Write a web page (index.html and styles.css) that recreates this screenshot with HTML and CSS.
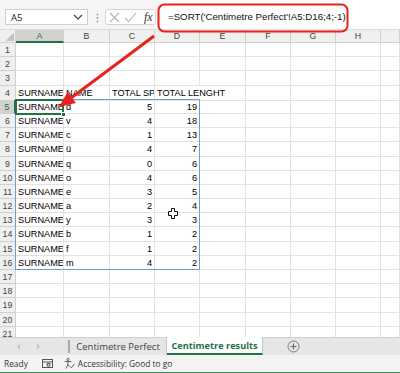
FILE: index.html
```html
<!DOCTYPE html>
<html>
<head>
<meta charset="utf-8">
<title>Centimetre results</title>
<link rel="stylesheet" href="styles.css">
</head>
<body>
<div class="app">
  <div class="fbar">
    <div class="namebox"><span>A5</span>
      <svg class="chev" width="10" height="6" viewBox="0 0 10 6"><path d="M1 1 L5 5 L9 1" fill="none" stroke="#444" stroke-width="1.2"/></svg>
    </div>
    <svg class="grip" width="3" height="10" viewBox="0 0 3 10"><circle cx="1.5" cy="1.5" r="0.9" fill="#9a9a9a"/><circle cx="1.5" cy="5" r="0.9" fill="#9a9a9a"/><circle cx="1.5" cy="8.5" r="0.9" fill="#9a9a9a"/></svg>
    <div class="fxbox">
      <svg width="11" height="11" viewBox="0 0 11 11"><path d="M1 1 L10 10 M10 1 L1 10" stroke="#b4b4b4" stroke-width="1.1" fill="none"/></svg>
      <svg width="13" height="11" viewBox="0 0 13 11"><path d="M1 6 L4.5 9.5 L12 1" stroke="#b4b4b4" stroke-width="1.1" fill="none"/></svg>
      <span class="fx">fx</span>
    </div>
    <div class="formula">=SORT('Centimetre Perfect'!A5:D16;4;-1)</div>
  </div>

  <div class="sheet">
    <div class="row hdr"><div class="corner"></div><div class="sel">A</div><div>B</div><div>C</div><div>D</div><div>E</div><div>F</div><div>G</div><div>H</div><div></div></div>
    <div class="row"><div class="rh">1</div><div></div><div></div><div></div><div></div><div></div><div></div><div></div><div></div><div></div></div>
    <div class="row"><div class="rh">2</div><div></div><div></div><div></div><div></div><div></div><div></div><div></div><div></div><div></div></div>
    <div class="row"><div class="rh">3</div><div></div><div></div><div></div><div></div><div></div><div></div><div></div><div></div><div></div></div>
    <div class="row"><div class="rh">4</div><div>SURNAME</div><div>NAME</div><div><span class="clip">TOTAL SPE</span></div><div class="ov">TOTAL LENGHT</div><div></div><div></div><div></div><div></div><div></div></div>
    <div class="row"><div class="rh rsel">5</div><div>SURNAME</div><div>d</div><div class="n">5</div><div class="n">19</div><div></div><div></div><div></div><div></div><div></div></div>
    <div class="row"><div class="rh">6</div><div>SURNAME</div><div>v</div><div class="n">4</div><div class="n">18</div><div></div><div></div><div></div><div></div><div></div></div>
    <div class="row"><div class="rh">7</div><div>SURNAME</div><div>c</div><div class="n">1</div><div class="n">13</div><div></div><div></div><div></div><div></div><div></div></div>
    <div class="row"><div class="rh">8</div><div>SURNAME</div><div>ü</div><div class="n">4</div><div class="n">7</div><div></div><div></div><div></div><div></div><div></div></div>
    <div class="row"><div class="rh">9</div><div>SURNAME</div><div>q</div><div class="n">0</div><div class="n">6</div><div></div><div></div><div></div><div></div><div></div></div>
    <div class="row"><div class="rh">10</div><div>SURNAME</div><div>o</div><div class="n">4</div><div class="n">6</div><div></div><div></div><div></div><div></div><div></div></div>
    <div class="row"><div class="rh">11</div><div>SURNAME</div><div>e</div><div class="n">3</div><div class="n">5</div><div></div><div></div><div></div><div></div><div></div></div>
    <div class="row"><div class="rh">12</div><div>SURNAME</div><div>a</div><div class="n">2</div><div class="n">4</div><div></div><div></div><div></div><div></div><div></div></div>
    <div class="row"><div class="rh">13</div><div>SURNAME</div><div>y</div><div class="n">3</div><div class="n">3</div><div></div><div></div><div></div><div></div><div></div></div>
    <div class="row"><div class="rh">14</div><div>SURNAME</div><div>b</div><div class="n">1</div><div class="n">2</div><div></div><div></div><div></div><div></div><div></div></div>
    <div class="row"><div class="rh">15</div><div>SURNAME</div><div>f</div><div class="n">1</div><div class="n">2</div><div></div><div></div><div></div><div></div><div></div></div>
    <div class="row"><div class="rh">16</div><div>SURNAME</div><div>m</div><div class="n">4</div><div class="n">2</div><div></div><div></div><div></div><div></div><div></div></div>
    <div class="row"><div class="rh">17</div><div></div><div></div><div></div><div></div><div></div><div></div><div></div><div></div><div></div></div>
    <div class="row"><div class="rh">18</div><div></div><div></div><div></div><div></div><div></div><div></div><div></div><div></div><div></div></div>
    <div class="row"><div class="rh">19</div><div></div><div></div><div></div><div></div><div></div><div></div><div></div><div></div><div></div></div>
    <div class="row"><div class="rh">20</div><div></div><div></div><div></div><div></div><div></div><div></div><div></div><div></div><div></div></div>
    <div class="row"><div class="rh">21</div><div></div><div></div><div></div><div></div><div></div><div></div><div></div><div></div><div></div></div>

    <div class="spill"></div>
    <div class="active"></div>
    <div class="handle"></div>
  </div>

  <div class="tabs">
    <div class="nav">
      <svg width="5" height="7" viewBox="0 0 5 7"><path d="M4 0.5 L0.8 3.5 L4 6.5 Z" fill="#c4c4c4"/></svg>
      <svg width="5" height="7" viewBox="0 0 5 7"><path d="M1 0.5 L4.2 3.5 L1 6.5 Z" fill="#c4c4c4"/></svg>
    </div>
    <div class="tsep"></div>
    <div class="tab">Centimetre Perfect</div>
    <div class="tab on">Centimetre results</div>
    <div class="tabrest">
      <svg width="13" height="13" viewBox="0 0 13 13"><circle cx="6.5" cy="6.5" r="5.5" fill="none" stroke="#7b7b7b" stroke-width="1"/><path d="M6.5 3.5 V9.5 M3.5 6.5 H9.5" stroke="#6b6b6b" stroke-width="1.2"/></svg>
    </div>
  </div>

  <div class="status">
    <span class="ready">Ready</span>
    <svg class="macro" width="11" height="9" viewBox="0 0 11 9"><rect x="0.5" y="0.5" width="10" height="8" fill="none" stroke="#555" stroke-width="1"/><path d="M0.5 3 H10.5" stroke="#555"/><circle cx="6.5" cy="5.8" r="2" fill="#555"/><circle cx="6.5" cy="5.8" r="0.9" fill="#f3f3f3"/></svg>
    <svg class="acc" width="11" height="11" viewBox="0 0 11 11"><circle cx="4" cy="1.5" r="1.1" fill="none" stroke="#555" stroke-width="0.9"/><path d="M0.5 3.6 H7.5 M4 3.6 V6.5 L2 10.5 M4 6.5 L5.2 8.5" stroke="#555" stroke-width="0.9" fill="none"/><path d="M6 8.2 L7.4 9.8 L10.5 5.8" stroke="#555" stroke-width="0.9" fill="none"/></svg>
    <span class="acctext">Accessibility: Good to go</span>
  </div>

  <svg class="annot" width="400" height="373" viewBox="0 0 400 373">
    <rect x="158.5" y="4.5" width="189" height="27" rx="6" ry="6" fill="none" stroke="#e8211d" stroke-width="2"/>
    <line x1="154" y1="36" x2="71" y2="98" stroke="#e8211d" stroke-width="3"/>
    <path d="M59 107 L67.6 91.9 L76 103.1 Z" fill="#e8211d"/>
    <path d="M171.5 208.5 h3 v3 h3 v4 h-3 v3 h-3 v-3 h-3 v-4 h3 z" fill="#fff" stroke="#111" stroke-width="1"/>
  </svg>
</div>
</body>
</html>
```

FILE: styles.css
```css
* { box-sizing: border-box; margin: 0; padding: 0; }
html, body { margin: 0; background: #fff; }
body { width: 400px; height: 373px; overflow: hidden; font-family: "Open Sans", "Liberation Sans", sans-serif; color: #222; }

.app { position: relative; width: 400px; height: 373px; display: flex; flex-direction: column; overflow: hidden; }

/* formula bar */
.fbar { height: 30px; flex: none; display: flex; align-items: flex-start; background: #f5f5f5; border-bottom: 1px solid #dcdcdc; padding-left: 5px; }
.namebox { margin-top: 9px; width: 83px; height: 16px; background: #fff; border: 1px solid #cfcfcf; display: flex; align-items: center; justify-content: space-between; padding: 0 3px 0 5px; font-size: 9.5px; color: #222; }
.chev { margin-right: 1px; }
.grip { margin: 13px 6px 0 8px; }
.fxbox { margin-top: 9px; width: 51px; height: 16px; background: #fff; border: 1px solid #d6d6d6; border-radius: 3px; display: flex; align-items: center; padding-left: 3px; gap: 4px; }
.fx { font-family: "Liberation Serif", serif; font-style: italic; font-size: 12px; color: #333; margin-left: 3px; line-height: 14px; }
.formula { align-self: stretch; flex: 1; margin-left: 5px; background: #fff; padding: 9px 0 0 7px; font-family: "Liberation Sans", sans-serif; font-size: 9.7px; line-height: 16px; color: #111; white-space: nowrap; }

/* sheet */
.sheet { position: relative; flex: none; height: 307px; overflow: hidden; background: #fff; }
.row { display: grid; grid-template-columns: 16px 48px 46px 45px 45px 46px 45px 45px 45px 19px; height: 14.2px; }
.row > div { border-right: 1px solid #e2e2e2; border-bottom: 1px solid #e2e2e2; font-family: "Liberation Sans", sans-serif; font-size: 9.2px; line-height: 13px; padding: 1px 0 0 2px; white-space: nowrap; overflow: hidden; color: #000; }
.row > .n { text-align: right; padding-right: 2px; }
.row > .ov { overflow: visible; border-right-color: transparent; }
.clip { display: block; overflow: hidden; }

.hdr { height: 13px; }
.hdr > div { background: #efefef; border-color: #d0d0d0; text-align: center; color: #444; padding: 0; line-height: 12px; font-size: 8.8px; }
.hdr > .sel { background: #d2d2d2; color: #1f6b41; border-bottom: 2px solid #217346; }
.hdr > .corner { background: #efefef linear-gradient(to top left, #c3c3c3 50%, transparent 50%) no-repeat right 1px bottom 1px / 8px 8px; }

.row > .rh { background: #efefef; border-color: #d0d0d0; text-align: center; color: #444; padding: 0; line-height: 14px; font-size: 8.8px; }
.row > .rsel { background: #d2d2d2; color: #1f6b41; border-right: 2px solid #217346; }

.spill { position: absolute; left: 15px; top: 69px; width: 185px; height: 171px; border: 1px solid #6f9bd6; pointer-events: none; }
.active { position: absolute; left: 15px; top: 69px; width: 49px; height: 16px; border: 2px solid #217346; }
.handle { position: absolute; left: 61px; top: 82px; width: 5px; height: 5px; background: #217346; border: 1px solid #fff; }

/* tabs */
.tabs { height: 18px; flex: none; display: flex; background: #e6e6e6; border-top: 1px solid #d0d0d0; font-size: 9.5px; }
.nav { width: 68px; display: flex; align-items: center; gap: 15px; padding-left: 16px; }
.tsep { width: 2px; margin: 2px 0 2px; background: #a8a8a8; }
.tab { width: 97px; display: flex; align-items: center; justify-content: center; color: #444; border-right: 1px solid #c4c4c4; white-space: nowrap; }
.tab.on { width: 96px; background: #fff; color: #1e7145; font-weight: 700; font-size: 9.2px; border-bottom: 2px solid #217346; border-right: 1px solid #c4c4c4; margin-top: -1px; }
.tabrest { flex: 1; display: flex; align-items: center; padding-left: 24px; }

/* status */
.status { height: 18px; flex: none; display: flex; align-items: center; background: #f3f3f3; border-bottom: 1px solid #3d8b5a; font-size: 8.4px; color: #333; }
.ready { margin-left: 4px; }
.macro { margin-left: 14px; }
.acc { margin-left: 11px; }
.acctext { margin-left: 3px; }

.annot { position: absolute; left: 0; top: 0; pointer-events: none; }
```
